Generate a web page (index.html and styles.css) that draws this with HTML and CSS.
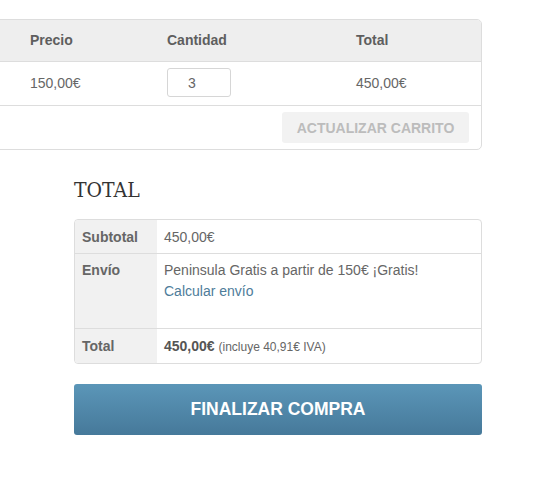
FILE: index.html
```html
<!DOCTYPE html>
<html lang="es">
<head>
<meta charset="utf-8">
<title>Carrito</title>
<link rel="stylesheet" href="styles.css">
</head>
<body>
<div class="page">
  <table class="cart">
    <thead>
      <tr>
        <th class="c-prod"></th>
        <th class="c-price">Precio</th>
        <th class="c-qty">Cantidad</th>
        <th class="c-total">Total</th>
      </tr>
    </thead>
    <tbody>
      <tr class="item">
        <td class="c-prod"></td>
        <td class="c-price">150,00€</td>
        <td class="c-qty"><input class="qty" type="text" value="3"></td>
        <td class="c-total">450,00€</td>
      </tr>
      <tr class="actions">
        <td colspan="4"><button class="update">ACTUALIZAR CARRITO</button></td>
      </tr>
    </tbody>
  </table>

  <section class="totals">
    <h2 class="totals-title">TOTAL</h2>
    <table class="sum">
      <tr class="r-sub">
        <th>Subtotal</th>
        <td>450,00€</td>
      </tr>
      <tr class="r-ship">
        <th>Envío</th>
        <td>Peninsula Gratis a partir de 150€ ¡Gratis!<br><a class="calc" href="#">Calcular envío</a></td>
      </tr>
      <tr class="r-total">
        <th>Total</th>
        <td><strong>450,00€</strong> <small>(incluye 40,91€ IVA)</small></td>
      </tr>
    </table>
    <button class="checkout">FINALIZAR COMPRA</button>
  </section>
</div>
</body>
</html>
```
FILE: styles.css
```css
html, body {
  margin: 0;
  padding: 0;
  overflow: hidden;
  background: #fff;
}
body {
  font-family: "Liberation Sans", Arial, sans-serif;
  font-size: 14px;
  color: #666;
}
.page {
  padding-top: 19px;
}
.cart {
  margin-left: -41px;
  width: 523px;
  border: 1px solid #ddd;
  border-radius: 5px;
  border-collapse: separate;
  border-spacing: 0;
  table-layout: fixed;
}
.cart th, .cart td {
  padding: 0 0 0 12px;
  text-align: left;
  border-bottom: 1px solid #ddd;
}
.cart thead th {
  background: #eee;
  height: 40px;
  padding-bottom: 1px;
  font-weight: bold;
  color: #5e5e5e;
}
.cart thead tr th:last-child {
  border-top-right-radius: 4px;
}
.cart .c-prod { width: 46px; }
.cart .c-price { width: 125px; }
.cart .c-qty { width: 177px; }
.cart .item td {
  height: 41px;
  padding-bottom: 2px;
}
.qty {
  box-sizing: border-box;
  width: 64px;
  height: 29px;
  border: 1px solid #d6d6d6;
  border-radius: 3px;
  padding: 0 0 0 20px;
  font-family: "Liberation Sans", Arial, sans-serif;
  font-size: 14px;
  color: #666;
  text-align: left;
  display: block;
}
.cart .actions td {
  border-bottom: 0;
  height: 43px;
  padding: 0 12px 0 0;
  text-align: right;
  vertical-align: top;
}
.update {
  margin-top: 6px;
  width: 187px;
  height: 31px;
  border: 0;
  border-radius: 3px;
  background: #f2f2f2;
  color: #bcbcbc;
  font-family: "Liberation Sans", Arial, sans-serif;
  font-weight: bold;
  font-size: 14px;
  padding: 0;
}
.totals {
  margin-left: 74px;
  width: 408px;
}
.totals-title {
  margin: 25px 0 0;
  height: 44px;
  font-family: "DejaVu Serif", serif;
  font-stretch: condensed;
  font-weight: normal;
  font-size: 21px;
  line-height: 30px;
  color: #333;
}
.sum {
  width: 408px;
  border: 1px solid #ddd;
  border-radius: 4px;
  border-collapse: separate;
  border-spacing: 0;
  overflow: hidden;
}
.sum th, .sum td {
  text-align: left;
  border-bottom: 1px solid #ddd;
  vertical-align: middle;
}
.sum th {
  width: 75px;
  background: #f1f1f1;
  color: #666;
  font-weight: bold;
  padding: 0 0 0 7px;
}
.sum td {
  padding: 0 0 0 7px;
  color: #666;
}
.sum .r-sub th, .sum .r-sub td { height: 33px; }
.sum .r-ship th, .sum .r-ship td {
  height: 75px;
  vertical-align: top;
  padding-top: 6px;
  box-sizing: border-box;
  line-height: 21px;
}
.sum .r-total th, .sum .r-total td {
  height: 34px;
  border-bottom: 0;
}
.sum tr:first-child th { border-top-left-radius: 3px; }
.sum tr:last-child th { border-bottom-left-radius: 3px; }
.calc {
  color: #4e7c9a;
  text-decoration: none;
}
.sum strong { color: #555; }
.sum small { font-size: 12px; color: #666; }
.checkout {
  display: block;
  margin-top: 20px;
  width: 408px;
  height: 51px;
  border: 0;
  border-radius: 3px;
  background: linear-gradient(#5b96b8, #46799a);
  color: #fff;
  font-family: "Liberation Sans", Arial, sans-serif;
  font-weight: bold;
  font-size: 17.5px;
  padding: 0;
}
```
